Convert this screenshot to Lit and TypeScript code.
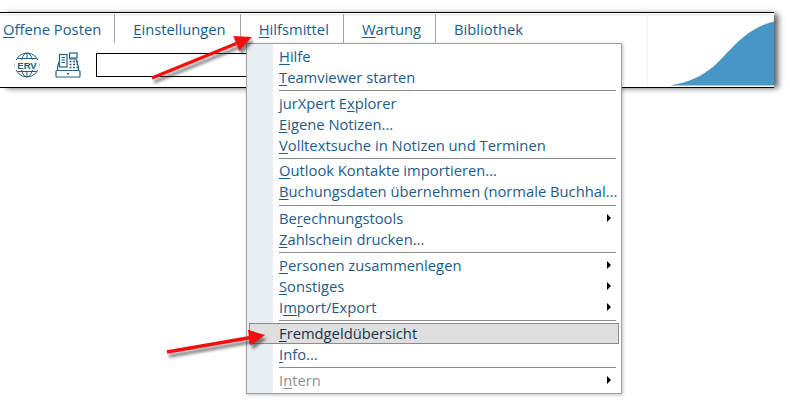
import { LitElement, html, css, svg } from "lit";
import { customElement } from "lit/decorators.js";

type Item = { pre?: string; u: string; post: string; sub?: boolean; hot?: boolean; off?: boolean; };
type Row = Item | { sep: number };

const rows: Row[] = [
  { u: "H", post: "ilfe" },
  { u: "T", post: "eamviewer starten" },
  { sep: 5 },
  { pre: "jurXpert E", u: "x", post: "plorer" },
  { u: "E", post: "igene Notizen..." },
  { u: "V", post: "olltextsuche in Notizen und Terminen" },
  { sep: 4 },
  { u: "O", post: "utlook Kontakte importieren..." },
  { u: "B", post: "uchungsdaten übernehmen (normale Buchhal..." },
  { sep: 6 },
  { pre: "Be", u: "r", post: "echnungstools", sub: true },
  { u: "Z", post: "ahlschein drucken..." },
  { sep: 5 },
  { u: "P", post: "ersonen zusammenlegen", sub: true },
  { u: "S", post: "onstiges", sub: true },
  { pre: "I", u: "m", post: "port/Export", sub: true },
  { sep: 5 },
  { u: "F", post: "remdgeldübersicht", hot: true },
  { u: "I", post: "nfo..." },
  { sep: 5 },
  { pre: "I", u: "n", post: "tern", sub: true, off: true },
];

const tabs: [string, string][] = [
  ["O", "ffene Posten"],
  ["E", "instellungen"],
  ["H", "ilfsmittel"],
  ["W", "artung"],
  ["", "Bibliothek"],
];

@customElement("app-root")
export class AppRoot extends LitElement {
  static styles = css`
    :host { display: block; position: relative; width: 790px; height: 402px; overflow: hidden; background: #fff;
      font-family: "Open Sans", sans-serif; font-size: 14.75px; color: #1c5c88; }
    .app { width: 774px; height: 76px; position: relative; top: 12px; box-sizing: border-box;
      border-top: 1px solid #000; border-bottom: 1px solid #000; background: #fff;
      box-shadow: 5px 1px 6px -1px rgba(0,0,0,.65); display: flex; flex-direction: column; }
    .tabs { display: flex; height: 29px; margin-top: 1px; background: linear-gradient(#f2f2f2 0, #f2f2f2 2px, #fff 2px); }
    .tab { padding: 0 14px 0 18px; line-height: 31px; border-right: 1px solid #a6a6a6; white-space: nowrap; box-sizing: border-box; }
    .tab:first-child { padding: 0 13px 0 3px; }
    .tab:last-child { border-right: 0; }
    .tab u { text-underline-offset: 2px; text-decoration-thickness: 1px; }
    .tools { display: flex; align-items: center; padding-left: 14px; gap: 15px; flex: 1; }
    .tools svg { display: block; }
    .input { width: 200px; height: 24px; border: 1.5px solid #000; box-sizing: border-box; }
    .chart { position: absolute; right: 0; top: 0; bottom: 0; width: 126px; border-left: 1px solid #f0f0f0; }
    .chart svg { position: absolute; left: 0; top: 0; }
    .menu { position: absolute; left: 246px; top: 43px; width: 376px; height: 351px; box-sizing: border-box;
      border: 1.5px solid #a0a0a0; background: linear-gradient(90deg, #e8eef2 0, #e8eef2 26.5px, #fff 26.5px);
      padding: 2px 2px 0 2px; box-shadow: 1px 1px 3px rgba(0,0,0,.25); }
    .row { height: 21px; line-height: 21px; padding-left: 30px; position: relative; white-space: nowrap; box-sizing: border-box; }
    .row u { text-underline-offset: 2px; text-decoration-thickness: 1px; }
    .row.hot { background: #dfdfdf; outline: 1px solid #8c8c8c; outline-offset: -1px; color: #17334a; }
    .row.off { color: #8f8f8f; }
    .caret { position: absolute; right: 8px; top: 6px; width: 0; height: 0; border-left: 4px solid #000;
      border-top: 4px solid transparent; border-bottom: 4px solid transparent; }
    .sep { display: flex; align-items: center; padding-left: 30px; padding-right: 3px; }
    .sep i { display: block; flex: 1; height: 1px; background: #8c8c8c; }
    .arrows { position: absolute; left: 0; top: 0; pointer-events: none; }
  `;

  private globe() {
    return html`<svg width="26" height="26" viewBox="0 0 26 26" fill="none" stroke="#245f85" stroke-width="1">
      <circle cx="13" cy="13" r="12"></circle>
      <ellipse cx="13" cy="13" rx="6" ry="12"></ellipse>
      <path d="M13 1V7M13 19V25M3.5 6.5H22.5M3.5 19.5H22.5"></path>
      <rect x="1" y="8" width="24" height="10" fill="#fff" stroke="none"></rect>
      <text x="13" y="17" text-anchor="middle" font-family="Liberation Sans" font-weight="700" font-size="9.5" fill="#245f85" stroke="none">ERV</text>
    </svg>`;
  }

  private register() {
    return html`<svg width="26" height="26" viewBox="0 0 26 26" fill="none" stroke="#245f85" stroke-width="1.2">
      <path d="M2.5 18.5V15L5 7H11M14 7H21L23.5 15V18.5"></path>
      <rect x="1" y="18.5" width="24" height="6.5" rx="1"></rect>
      <rect x="4.5" y="2.5" width="7.5" height="12.5" fill="#fff"></rect>
      <path d="M6.5 5.5H10M6.5 8H10M6.5 10.5H10"></path>
      <rect x="14.5" y="1" width="7.5" height="5" fill="#fff"></rect>
      <path d="M14.5 9.5h2M18 9.5h2M21.5 9.5h1.5M14.5 12.5h2M18 12.5h2M21.5 12.5h1.5M14.5 15.5h2M18 15.5h2M21.5 15.5h1.5" stroke-width="1.6"></path>
      <path d="M12 21.8h2" stroke-width="1.6"></path>
    </svg>`;
  }

  private arrow(x1: number, y1: number, x2: number, y2: number, w: number, l: number) {
    const a = Math.atan2(y2 - y1, x2 - x1);
    const bx = x2 - l * Math.cos(a), by = y2 - l * Math.sin(a);
    const nx = -Math.sin(a), ny = Math.cos(a);
    const pts = `${bx + nx * w},${by + ny * w} ${x2},${y2} ${bx - nx * w},${by - ny * w}`;
    return svg`
      <g transform="translate(2 4)" filter="url(#blur)" opacity=".6">
        <line x1=${x1} y1=${y1} x2=${bx} y2=${by} stroke="#333" stroke-width="3.4"></line>
        <polygon points=${pts} fill="#333"></polygon>
      </g>
      <line x1=${x1} y1=${y1} x2=${bx} y2=${by} stroke="#f40f0f" stroke-width="3.4"></line>
      <polygon points=${pts} fill="#f40f0f"></polygon>`;
  }

  render() {
    return html`
      <div class="app">
        <div class="tabs">
          ${tabs.map(([u, r]) => html`<div class="tab">${u ? html`<u>${u}</u>` : ""}${r}</div>`)}
        </div>
        <div class="tools">
          ${this.globe()}
          ${this.register()}
          <div class="input"></div>
        </div>
        <div class="chart">
          <svg width="126" height="74" viewBox="0 0 126 74">
            <path d="M22 72.5C42 69 54 63 66 53C78 42 88 29 100 20.500C108 15 116 11 126 8.500V72.500Z" fill="#4896c5"></path>
          </svg>
        </div>
      </div>
      <div class="menu">
        ${rows.map((r) =>
          "sep" in r
            ? html`<div class="sep" style="height:${r.sep}px"><i></i></div>`
            : html`<div class="row ${r.hot ? "hot" : ""} ${r.off ? "off" : ""}">${r.pre ?? ""}<u>${r.u}</u>${r.post}${r.sub ? html`<span class="caret"></span>` : ""}</div>`
        )}
      </div>
      <svg class="arrows" width="790" height="402" viewBox="0 0 790 402">
        <defs><filter id="blur" x="-20%" y="-50%" width="140%" height="200%"><feGaussianBlur stdDeviation="1.8"></feGaussianBlur></filter></defs>
        ${this.arrow(152, 78, 252, 37, 8, 17)}
        ${this.arrow(167, 352, 265, 335, 8, 16)}
      </svg>
    `;
  }
}
